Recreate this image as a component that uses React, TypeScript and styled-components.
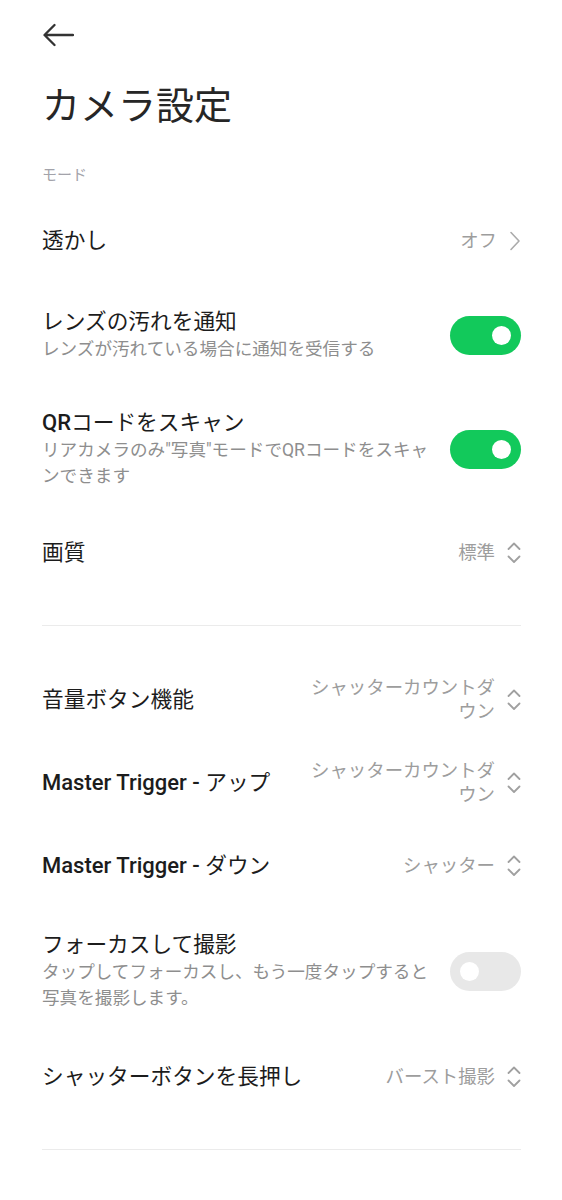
import React from "react";
import styled, { createGlobalStyle } from "styled-components";

const GlobalStyle = createGlobalStyle`
  html, body {
    margin: 0;
    padding: 0;
    background: #ffffff;
  }
  body {
    font-family: Roboto, "Noto Sans CJK JP", sans-serif;
    color: #1c1c1c;
    -webkit-font-smoothing: antialiased;
  }
  * { box-sizing: border-box; }
`;

const Page = styled.div`
  width: 562px;
  height: 1200px;
  overflow: hidden;
  padding: 0 41px 0 42px;
  display: flex;
  flex-direction: column;
  background: #fff;
`;

const TopBar = styled.div`
  height: 70px;
  display: flex;
  align-items: center;
`;

const BackButton = styled.button`
  border: none;
  background: transparent;
  padding: 0;
  margin: 0;
  width: 34px;
  height: 24px;
  display: flex;
  align-items: center;
  justify-content: flex-start;
  cursor: pointer;
`;

const Title = styled.h1`
  margin: 10px 0 0;
  font-size: 38px;
  line-height: 52px;
  font-weight: 400;
  color: #262626;
  letter-spacing: 0;
`;

const SectionLabel = styled.div`
  margin: 33px 0 15px;
  font-size: 15px;
  line-height: 20px;
  color: #a3a3aa;
`;

const Row = styled.div<{ $h: number }>`
  height: ${(p) => p.$h}px;
  display: flex;
  align-items: center;
  justify-content: space-between;
  gap: 16px;
`;

const TextCol = styled.div`
  flex: 1 1 auto;
  min-width: 0;
  max-width: 394px;
  display: flex;
  flex-direction: column;
`;

const ItemTitle = styled.div`
  font-size: 21.7px;
  line-height: 28px;
  font-weight: 400;
  color: #1c1c1c;
  white-space: nowrap;
`;

const Latin = styled.span`
  font-family: Roboto, sans-serif;
  font-weight: 500;
  font-size: 22px;
`;

const Subtitle = styled.div`
  font-size: 17.6px;
  line-height: 26px;
  color: #8e8e8e;
`;

const ValueWrap = styled.div`
  flex: 0 0 auto;
  display: flex;
  align-items: center;
  gap: 12px;
`;

const ValueText = styled.div`
  max-width: 192px;
  font-size: 18.4px;
  line-height: 24px;
  color: #9d9d9d;
  text-align: right;
`;

const Toggle = styled.div<{ $on: boolean }>`
  flex: 0 0 auto;
  width: 71px;
  height: 39px;
  border-radius: 20px;
  background: ${(p) => (p.$on ? "#12c95b" : "#e8e8e8")};
  display: flex;
  align-items: center;
  justify-content: ${(p) => (p.$on ? "flex-end" : "flex-start")};
  padding: 0 10px;
`;

const Knob = styled.div`
  width: 19px;
  height: 19px;
  border-radius: 50%;
  background: #ffffff;
`;

const Divider = styled.div<{ $top: number; $bottom: number }>`
  height: 1px;
  background: #ebebeb;
  margin: ${(p) => p.$top}px 0 ${(p) => p.$bottom}px;
`;

const ArrowIcon = () => (
  <svg width="32" height="24" viewBox="0 0 32 24" fill="none">
    <path
      d="M31 12H3M12.5 2L2.5 12L12.5 22"
      stroke="#333"
      strokeWidth="2.3"
      strokeLinecap="round"
      strokeLinejoin="round"
    />
  </svg>
);

const ChevronRight = () => (
  <svg width="12" height="20" viewBox="0 0 12 20" fill="none">
    <path
      d="M2 1.5L10 10L2 18.5"
      stroke="#ababab"
      strokeWidth="1.6"
      strokeLinecap="round"
      strokeLinejoin="round"
    />
  </svg>
);

const UpDown = () => (
  <svg width="14" height="24" viewBox="0 0 14 24" fill="none">
    <path
      d="M1.5 8L7 2.5L12.5 8M1.5 15.5L7 21L12.5 15.5"
      stroke="#a0a0a0"
      strokeWidth="1.8"
      strokeLinecap="round"
      strokeLinejoin="round"
    />
  </svg>
);

type Item =
  | { kind: "link"; title: React.ReactNode; value: string; h: number }
  | { kind: "select"; title: React.ReactNode; value: string; h: number }
  | { kind: "toggle"; title: React.ReactNode; sub: string; on: boolean; h: number };

const ItemRow = ({ item }: { item: Item }) => {
  if (item.kind === "toggle") {
    return (
      <Row $h={item.h}>
        <TextCol>
          <ItemTitle>{item.title}</ItemTitle>
          <Subtitle>{item.sub}</Subtitle>
        </TextCol>
        <Toggle $on={item.on}>
          <Knob />
        </Toggle>
      </Row>
    );
  }
  return (
    <Row $h={item.h}>
      <ItemTitle>{item.title}</ItemTitle>
      <ValueWrap>
        <ValueText>{item.value}</ValueText>
        {item.kind === "link" ? <ChevronRight /> : <UpDown />}
      </ValueWrap>
    </Row>
  );
};

const group1: Item[] = [
  { kind: "link", title: "透かし", value: "オフ", h: 82 },
  {
    kind: "toggle",
    title: "レンズの汚れを通知",
    sub: "レンズが汚れている場合に通知を受信する",
    on: true,
    h: 106,
  },
  {
    kind: "toggle",
    title: (
      <>
        <Latin>QR</Latin>コードをスキャン
      </>
    ),
    sub: "リアカメラのみ\"写真\"モードでQRコードをスキャンできます",
    on: true,
    h: 122,
  },
  { kind: "select", title: "画質", value: "標準", h: 86 },
];

const group2: Item[] = [
  { kind: "select", title: "音量ボタン機能", value: "シャッターカウントダウン", h: 84 },
  {
    kind: "select",
    title: (
      <>
        <Latin>Master Trigger - </Latin>アップ
      </>
    ),
    value: "シャッターカウントダウン",
    h: 82,
  },
  {
    kind: "select",
    title: (
      <>
        <Latin>Master Trigger - </Latin>ダウン
      </>
    ),
    value: "シャッター",
    h: 84,
  },
  {
    kind: "toggle",
    title: "フォーカスして撮影",
    sub: "タップしてフォーカスし、もう一度タップすると写真を撮影します。",
    on: false,
    h: 126,
  },
  { kind: "select", title: "シャッターボタンを長押し", value: "バースト撮影", h: 86 },
];

export default function App() {
  return (
    <>
      <GlobalStyle />
      <Page>
        <TopBar>
          <BackButton aria-label="戻る">
            <ArrowIcon />
          </BackButton>
        </TopBar>
        <Title>カメラ設定</Title>
        <SectionLabel>モード</SectionLabel>
        {group1.map((it, i) => (
          <ItemRow key={i} item={it} />
        ))}
        <Divider $top={29} $bottom={32} />
        {group2.map((it, i) => (
          <ItemRow key={i} item={it} />
        ))}
        <Divider $top={29} $bottom={0} />
      </Page>
    </>
  );
}
